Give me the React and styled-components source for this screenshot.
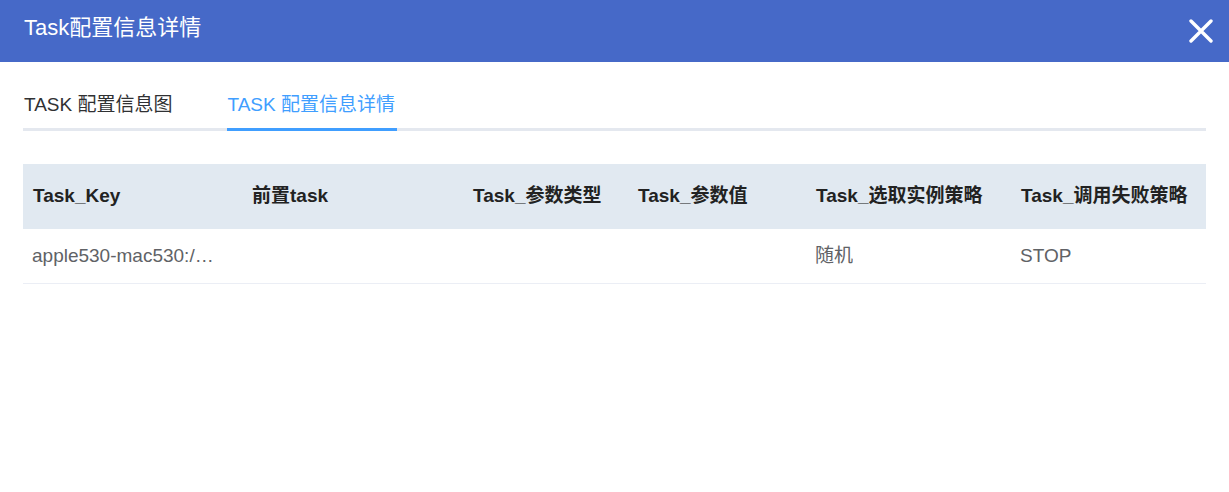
import styled, { createGlobalStyle } from 'styled-components';

const GlobalStyle = createGlobalStyle`
  body {
    margin: 0;
    background: #fff;
    font-family: Arial, "Liberation Sans", "Noto Sans CJK SC", sans-serif;
  }
`;

const Dialog = styled.div`
  width: 1229px;
  height: 492px;
  background: #fff;
`;

// 상단 헤더
const Header = styled.div`
  height: 62px;
  padding: 0 14px 0 24px;
  display: flex;
  align-items: center;
  justify-content: space-between;
  background-color: #4669c8;
  color: #fff;
`;

const Title = styled.h2`
  margin: 0;
  font-size: 22px;
  line-height: 26px;
  font-weight: 400;
  padding-bottom: 6px;
`;

const CloseButton = styled.button`
  width: 28px;
  height: 28px;
  padding: 0;
  display: flex;
  align-items: center;
  justify-content: center;
  border: none;
  background: none;
  cursor: pointer;
`;

const Body = styled.div`
  padding: 28px 23px 0 23px;
`;

const Tabs = styled.div`
  display: flex;
  gap: 52px;
  border-bottom: 3px solid #e4e8ef;
`;

const Tab = styled.div`
  padding: 4px 2px 12px 1px;
  margin-bottom: -3px;
  font-size: 19px;
  line-height: 22px;
  color: ${({ $active }) => ($active ? '#409eff' : '#303133')};
  border-bottom: 3px solid
    ${({ $active }) => ($active ? '#409eff' : 'transparent')};
  cursor: pointer;
`;

const Table = styled.div`
  margin-top: 33px;
  display: grid;
  grid-template-columns: 219px 221px 165px 178px 205px 195px;
`;

const HeadCell = styled.div`
  height: 63px;
  padding: 0 10px 2px;
  display: flex;
  align-items: center;
  background-color: #e1e9f1;
  font-size: 19px;
  line-height: 22px;
  font-weight: 700;
  color: #222;
  white-space: nowrap;
`;

const Cell = styled.div`
  height: 53px;
  padding: 0 10px 1px 9px;
  display: flex;
  align-items: center;
  border-bottom: 1px solid #ebeef5;
  font-size: 19px;
  line-height: 22px;
  color: #606266;
  white-space: nowrap;
  overflow: hidden;
`;

const Ellipsis = styled.span`
  display: block;
  max-width: ${({ $max }) => ($max ? `${$max}px` : 'none')};
  overflow: hidden;
  text-overflow: ellipsis;
`;

const columns = [
  'Task_Key',
  '前置task',
  'Task_参数类型',
  'Task_参数值',
  'Task_选取实例策略',
  'Task_调用失败策略',
];

const rows = [['apple530-mac530:/api/task/execute', '', '', '', '随机', 'STOP']];

const App = () => {
  return (
    <>
      <GlobalStyle />
      <Dialog>
        <Header>
          <Title>Task配置信息详情</Title>
          <CloseButton aria-label="close">
            <svg width="24" height="24" viewBox="0 0 24 24">
              <path
                d="M2 2 L22 22 M22 2 L2 22"
                stroke="#fff"
                strokeWidth="3.4"
                strokeLinecap="round"
              />
            </svg>
          </CloseButton>
        </Header>
        <Body>
          <Tabs>
            <Tab>TASK 配置信息图</Tab>
            <Tab $active>TASK 配置信息详情</Tab>
          </Tabs>
          <Table>
            {columns.map((c) => (
              <HeadCell key={c}>{c}</HeadCell>
            ))}
            {rows.map((r, i) =>
              r.map((v, j) => (
                <Cell key={`${i}-${j}`}>
                  <Ellipsis $max={j === 0 ? 189 : 0}>{v}</Ellipsis>
                </Cell>
              ))
            )}
          </Table>
        </Body>
      </Dialog>
    </>
  );
};

export default App;
